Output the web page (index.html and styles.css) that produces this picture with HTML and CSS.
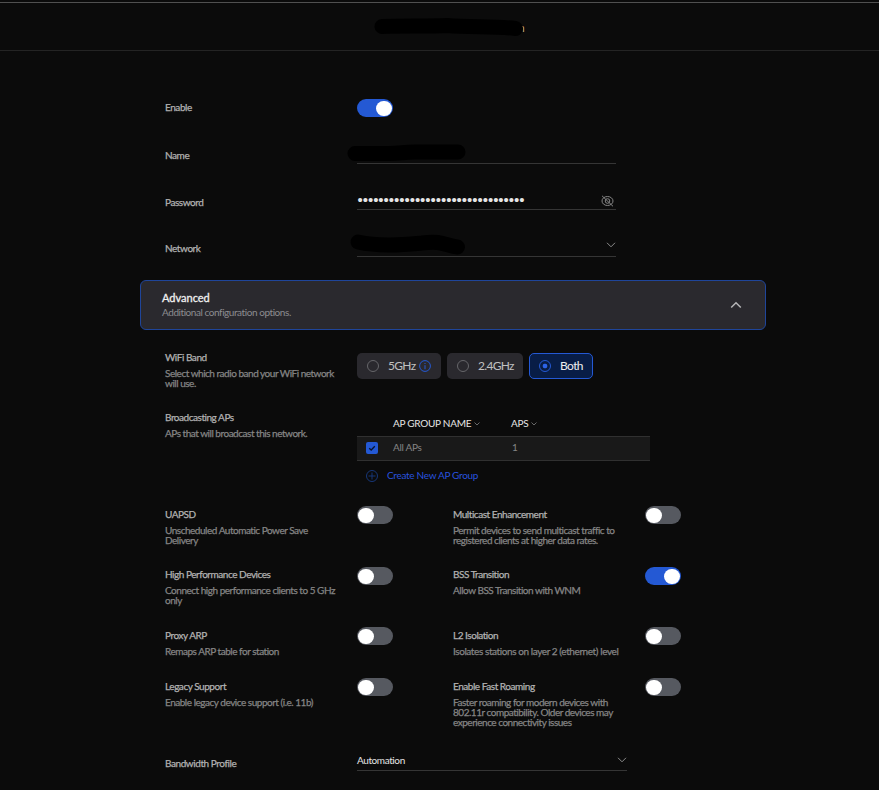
FILE: index.html
```html
<!DOCTYPE html>
<html lang="en">
<head>
<meta charset="utf-8">
<title>WiFi Network</title>
<link rel="stylesheet" href="styles.css">
</head>
<body>
<header class="topbar">
  <span class="tail">n</span>
  <svg class="mask mask-title" width="160" height="30" viewBox="370 12 160 30"><path d="M382 26.500C400 25.500 430 26.500 447 25.500C470 27.500 495 26 515.500 28.500"/></svg>
</header>
<main>
  <section class="basics">
    <div class="row enable"><span class="label">Enable</span><span class="toggle on"></span></div>
    <div class="row name"><span class="label">Name</span><div class="field">
      <svg class="mask mask-name" width="130" height="26" viewBox="342 140 130 26"><path d="M355 153.500H385C400 154 402 152 415 152H458"/></svg></div></div>
    <div class="row password"><span class="label">Password</span><div class="field"><span class="dots">••••••••••••••••••••••••••••••••</span>
      <svg class="eye" width="13" height="12" viewBox="0 0 13 12"><ellipse cx="6.500" cy="6" rx="5.500" ry="4.500"/><circle cx="6.500" cy="6" r="2.300"/><path d="M1 .8L12 11.300"/></svg></div></div>
    <div class="row network"><span class="label">Network</span><div class="field">
      <svg class="mask mask-net" width="130" height="30" viewBox="345 230 130 30"><path d="M358 242C380 247 405 244.500 422 243C444 240 445 246 457.500 247"/></svg>
      <svg class="chev" width="10" height="6" viewBox="0 0 10 6"><path d="M1 .8L5 4.800L9 .8"/></svg></div></div>
  </section>
  <section class="advanced">
    <div><h2>Advanced</h2><p>Additional configuration options.</p></div>
    <svg class="up" width="12" height="8" viewBox="0 0 12 8"><path d="M1.200 6.500L6 1.700L10.800 6.500"/></svg>
  </section>
  <section class="setting band">
    <div class="text"><h3>WiFi Band</h3><p>Select which radio band your WiFi network<br>will use.</p></div>
    <div class="choices">
      <div class="choice five"><i class="radio"></i><span>5GHz</span><svg class="info" width="12" height="12" viewBox="0 0 12 12"><circle cx="6" cy="6" r="5.400"/><path d="M6 3v1M6 5.200v4"/></svg></div>
      <div class="choice two"><i class="radio"></i><span>2.4GHz</span></div>
      <div class="choice both"><i class="radio"></i><span>Both</span></div>
    </div>
  </section>
  <section class="setting broadcast">
    <div class="text"><h3>Broadcasting APs</h3><p>APs that will broadcast this network.</p></div>
    <div class="table">
      <div class="thead"><span></span><span>AP GROUP NAME<svg width="6" height="4" viewBox="0 0 6 4"><path d="M.5 .5L3 3L5.500 .5"/></svg></span><span class="th-aps">APS<svg width="6" height="4" viewBox="0 0 6 4"><path d="M.5 .5L3 3L5.500 .5"/></svg></span></div>
      <div class="trow"><span class="check"><svg width="12" height="12" viewBox="0 0 12 12"><path d="M3.200 6.200L5.200 8L8.800 4.300"/></svg></span><span class="cell">All APs</span><span class="cell num">1</span></div>
      <div class="create"><svg width="12" height="12" viewBox="0 0 12 12"><circle cx="6" cy="6" r="5.500"/><path d="M6 2.500v7M2.500 6h7"/></svg><span class="cell">Create New AP Group</span></div>
    </div>
  </section>
  <section class="options">
    <div class="text"><h3>UAPSD</h3><p>Unscheduled Automatic Power Save<br>Delivery</p></div><span class="toggle"></span>
    <div class="text"><h3>Multicast Enhancement</h3><p>Permit devices to send multicast traffic to<br>registered clients at higher data rates.</p></div><span class="toggle"></span>
    <div class="text"><h3>High Performance Devices</h3><p>Connect high performance clients to 5 GHz<br>only</p></div><span class="toggle low"></span>
    <div class="text"><h3>BSS Transition</h3><p>Allow BSS Transition with WNM</p></div><span class="toggle on low"></span>
    <div class="text"><h3>Proxy ARP</h3><p>Remaps ARP table for station</p></div><span class="toggle"></span>
    <div class="text"><h3>L2 Isolation</h3><p class="loose">Isolates stations on layer 2 (ethernet) level</p></div><span class="toggle"></span>
    <div class="text"><h3>Legacy Support</h3><p>Enable legacy device support (i.e. 11b)</p></div><span class="toggle"></span>
    <div class="text"><h3>Enable Fast Roaming</h3><p>Faster roaming for modern devices with<br>802.11r compatibility. Older devices may<br>experience connectivity issues</p></div><span class="toggle"></span>
  </section>
  <section class="row bandwidth"><span class="label">Bandwidth Profile</span><div class="field wide"><span>Automation</span><svg class="chev" width="10" height="6" viewBox="0 0 10 6"><path d="M1 .8L5 4.800L9 .8"/></svg></div></section>
</main>
</body>
</html>
```
FILE: styles.css
```css
* { box-sizing: border-box; }
html, body { height: 790px; overflow: hidden; }
body { margin: 0; background: #0b0b0b; color: #b2b2b2; font: 10px/12px Lato, "Liberation Sans", sans-serif; white-space: nowrap; }
h2, h3, p { margin: 0; font-weight: 400; }
svg { display: block; fill: none; overflow: visible; flex: none; }
.topbar { position: relative; height: 51px; border-bottom: 1px solid #242424; background: linear-gradient(#0b0b0b 2px, #505050 2px, #505050 3px, #0b0b0b 3px); }
.tail { position: absolute; left: 518.5px; top: 22px; font-size: 11px; color: #c6ae83; }
.mask { position: absolute; stroke: #000; stroke-width: 15; stroke-linecap: round; stroke-linejoin: round; }
.mask-title { left: 370px; top: 12px; }
.mask-name { left: -15px; top: 0; }
.mask-net { left: -12px; top: -3px; }
main { padding-left: 165px; }
.row { display: grid; grid-template-columns: 192px auto; justify-content: start; align-items: end; height: 24px; }
.label { line-height: 16px; letter-spacing: -.43px; -webkit-text-stroke: .25px; padding-bottom: 1px; }
.field { position: relative; width: 259px; height: 24px; border-bottom: 1px solid #353535; }
.enable { margin-top: 48px; height: 18px; align-items: center; }
.enable .label { padding-bottom: 2px; }
.name { margin-top: 23px; }
.password { margin-top: 22px; }
.password .label { padding-bottom: 0; }
.network { margin-top: 23px; }
.toggle { display: block; width: 36px; height: 18px; border-radius: 9px; background: #565960; padding: 1.5px 1.25px; }
.toggle::before { content: ""; display: block; width: 15.5px; height: 15.5px; border-radius: 50%; background: #fff; }
.toggle.on { background: #2459d4; }
.toggle.on::before { margin-left: 18px; }
.password .field, .network .field, .wide { display: flex; justify-content: space-between; }
.dots { font: 15px/14px "Liberation Sans", sans-serif; letter-spacing: -.035px; color: #e5e5e5; margin: 7px 0 0 .5px; }
.eye { margin: 9px 2px 0 0; stroke: #858585; stroke-width: 1; }
.chev { margin: 10px 0 0 auto; stroke: #8b8b8b; stroke-width: 1; }
.network .chev { margin-top: 9px; }
.advanced { width: 626px; height: 50px; margin: 23px 0 0 -25px; padding: 10px 23px 0 21px; border: 1px solid #1f459a; border-radius: 6px; background: #2a292e; display: flex; justify-content: space-between; }
.advanced h2 { font-size: 11px; line-height: 14px; color: #f0f0f0; -webkit-text-stroke: .3px; }
.advanced p { margin-top: 1px; color: #8c8c90; letter-spacing: -.44px; }
.up { margin-top: 10px; stroke: #b5b5b7; stroke-width: 1.5; }
.text h3 { font-size: 10px; line-height: 12px; color: #b2b2b2; letter-spacing: -.46px; -webkit-text-stroke: .25px; }
.text p { margin-top: 5px; line-height: 10px; color: #858585; letter-spacing: -.48px; -webkit-text-stroke: .25px; }
.text .loose { letter-spacing: -.41px; }
.setting { display: grid; grid-template-columns: 192px 293px; align-items: start; }
.band { margin-top: 21px; height: 60px; }
.choices { display: flex; gap: 6px; margin-top: 2px; }
.choice { height: 26px; border-radius: 5px; background: #2a292e; display: flex; align-items: center; padding-left: 10px; font-size: 12px; color: #c0c0c0; letter-spacing: -.7px; }
.five { width: 84px; } .two { width: 76px; } .both { width: 64px; }
.radio { width: 12px; height: 12px; border: 1px solid #66666a; border-radius: 50%; margin-right: 9px; flex: none; }
.info { margin-left: 3.5px; stroke: #2459d4; }
.choice.both { background: #081d46; border: 1px solid #2459d4; color: #eee; padding-left: 9px; letter-spacing: -.6px; }
.both .radio { border-color: #2459d4; background: radial-gradient(#2b63e8 2px, transparent 2.700px); }
.broadcast { height: 98px; }
.thead, .trow { display: grid; grid-template-columns: 36px 118px auto; align-items: center; justify-content: start; }
.thead { height: 25px; padding-bottom: 2px; color: #e5e5e5; letter-spacing: -.27px; }
.thead span { display: flex; align-items: center; }
.thead svg { stroke: #686868; margin: 2px 0 0 3px; }
.trow { height: 25px; background: #191919; border: solid #303030; border-width: 1px 0; color: #858585; }
.cell { letter-spacing: -.3px; padding-bottom: 2px; }
.trow .cell { padding-bottom: 3px; }
.num { padding-left: 1px; }
.check { width: 12px; height: 12px; margin: 0 0 1px 9px; border-radius: 2px; background: #2459d4; }
.check svg { stroke: #07142f; stroke-width: 1.300; }
.create { display: flex; align-items: center; height: 30px; padding-left: 9px; gap: 9px; color: #2852df; }
.create svg { stroke: #173779; stroke-width: 1; }
.options { display: grid; grid-template-columns: 192px 96px 192px 36px; grid-template-rows: 60px 61px 51px 73px; align-items: start; }
.options .text { margin-top: -1px; }
.options .toggle { margin-top: -3px; }
.options .low { margin-top: -2px; }
.wide { width: 270px; height: 24px; color: #e5e5e5; line-height: 26px; letter-spacing: -.4px; }
.bandwidth { height: 24px; margin-top: -7px; }
.bandwidth .label { padding-bottom: 0; }
```
